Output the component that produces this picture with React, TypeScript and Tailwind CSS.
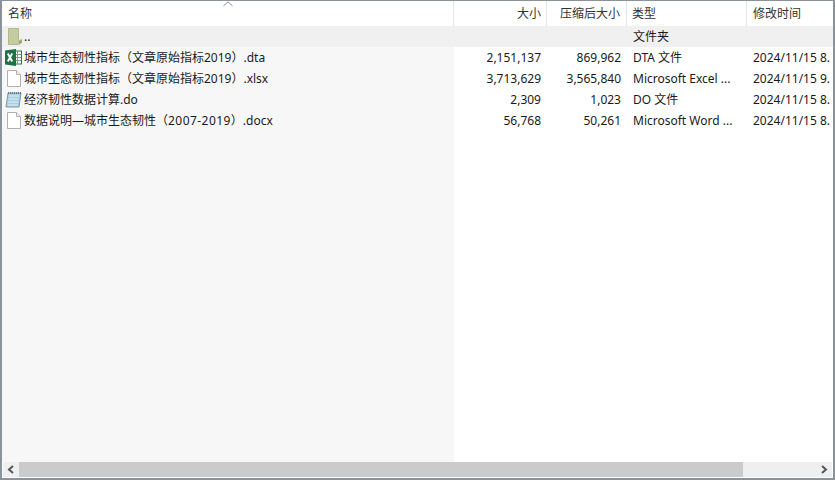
const font = "font-['Noto_Sans','Noto_Sans_CJK_SC',sans-serif]";

function Cell({ w, right, children }: { w: string; right?: boolean; children?: React.ReactNode }) {
  return <div className={`${w} shrink-0 whitespace-nowrap ${right ? "text-right pr-[6px]" : "pl-[6px]"}`}>{children}</div>;
}

function Folder() {
  return (
    <svg width="15" height="18" viewBox="0 0 15 18" className="shrink-0">
      <path d="M.5.5h10v13l3-2v3l-3 2H.5z" fill="#c5cc9f" stroke="#b3b98e" />
      <path d="M11 13.500l3-2v3l-3 2z" fill="#9da273" />
    </svg>
  );
}
function Excel() {
  return (
    <svg width="17" height="17" viewBox="0 0 17 17" className="shrink-0">
      <rect x="7" y="2" width="9.500" height="13" fill="#fff" stroke="#1f7a45" />
      <path d="M12.500 2v13M7 5.500h9M7 8.500h9M7 11.500h9" stroke="#6aa583" strokeWidth="1" />
      <path d="M0 1.500 11 0v17L0 15.500z" fill="#1e7145" />
      <path d="M2.800 4.500l4.400 8M7.200 4.500l-4.400 8" stroke="#fff" strokeWidth="1.900" />
    </svg>
  );
}
function Doc() {
  return (
    <svg width="14" height="17" viewBox="0 0 14 17" className="shrink-0 ml-[2px] mr-[1px]">
      <path d="M.5.500h9l4 4v12H.5z" fill="#fff" stroke="#b0b0b0" />
      <path d="M9.500.500v4h4" fill="#f0f0f0" stroke="#b0b0b0" />
    </svg>
  );
}
function Note() {
  return (
    <svg width="17" height="17" viewBox="0 0 17 17" className="shrink-0">
      <path d="M3 2h13l-2 14H1z" fill="#a9cfe2" stroke="#7d9aa8" />
      <path d="M4 5h10M3.600 8h10M3.200 11h10M2.800 14h10" stroke="#e2f0f6" />
      <path d="M3 2h13" stroke="#5d6a72" strokeWidth="1.600" strokeDasharray="1 1" />
    </svg>
  );
}

const rows = [
  { icon: <Excel />, name: <>城市生态韧性指标（文章原始指标2019）.dta</>, size: "2,151,137", comp: "869,962", type: "DTA 文件", time: "2024/11/15 8." },
  { icon: <Doc />, name: <>城市生态韧性指标（文章原始指标2019）.xlsx</>, size: "3,713,629", comp: "3,565,840", type: "Microsoft Excel ...", time: "2024/11/15 9." },
  { icon: <Note />, name: <>经济韧性数据计算.do</>, size: "2,309", comp: "1,023", type: "DO 文件", time: "2024/11/15 8." },
  { icon: <Doc />, name: <>数据说明—城市生态韧性（<span className="tracking-[0.45px]">2007-2019</span>）.docx</>, size: "56,768", comp: "50,261", type: "Microsoft Word ...", time: "2024/11/15 8." },
];

export default function App() {
  return (
    <div className={`${font} w-[835px] h-[480px] bg-white text-[12px] text-[#1a1a1a] border-t border-r-2 border-b-2 border-l-2 border-[#8a929c] flex flex-col overflow-hidden relative`}>
      <svg width="10" height="6" viewBox="0 0 10 6" className="absolute left-[221px] top-0">
        <path d="M.5 5 5 .8 9.500 5" fill="none" stroke="#8a8a8a" />
      </svg>
      <div className="flex h-[25px] items-center shrink-0 text-[#333]">
        <div className="w-[452px] pl-[6px] h-full flex items-center border-r border-[#e5e5e5]">名称</div>
        <div className="w-[93px] pr-[5px] h-full flex items-center justify-end border-r border-[#e5e5e5]">大小</div>
        <div className="w-[80px] pr-[6px] h-full flex items-center justify-end border-r border-[#e5e5e5]">压缩后大小</div>
        <div className="w-[120px] pl-[5px] h-full flex items-center border-r border-[#e5e5e5]">类型</div>
        <div className="flex-1 pl-[6px] h-full flex items-center">修改时间</div>
      </div>
      <div className="flex-1 flex flex-col relative">
        <div className="absolute left-0 top-0 bottom-0 w-[452px] bg-[#f7f7f7]" />
        <div className="relative flex h-[21px] items-center bg-[#f0f0f0]">
          <div className="w-[452px] shrink-0 flex items-center pl-[6px]">
            <Folder />
            <span className="ml-[1px]">..</span>
          </div>
          <Cell w="w-[93px]" />
          <Cell w="w-[80px]" />
          <Cell w="w-[120px]">文件夹</Cell>
        </div>
        {rows.map((r) => (
          <div key={r.size} className="relative flex h-[21px] items-center">
            <div className="w-[452px] shrink-0 flex items-center pl-[3px] gap-[2px] whitespace-nowrap">
              {r.icon}
              <span>{r.name}</span>
            </div>
            <Cell w="w-[93px]" right>{r.size}</Cell>
            <Cell w="w-[80px]" right>{r.comp}</Cell>
            <Cell w="w-[120px]">{r.type}</Cell>
            <Cell w="w-[80px]">{r.time}</Cell>
          </div>
        ))}
      </div>
      <div className="h-[15px] mb-[1px] shrink-0 flex bg-[#efefef] relative mx-[1px]">
        <div className="w-[16px] flex items-center justify-center">
          <svg width="8" height="9" viewBox="0 0 8 9"><path d="M6 1 2 4.500 6 8" fill="none" stroke="#555" strokeWidth="2" /></svg>
        </div>
        <div className="w-[724px] bg-[#cbcbcb]" />
        <div className="flex-1 flex items-center justify-end pr-[4px]">
          <svg width="8" height="9" viewBox="0 0 8 9"><path d="M2 1l4 3.500L2 8" fill="none" stroke="#555" strokeWidth="2" /></svg>
        </div>
      </div>
    </div>
  );
}
